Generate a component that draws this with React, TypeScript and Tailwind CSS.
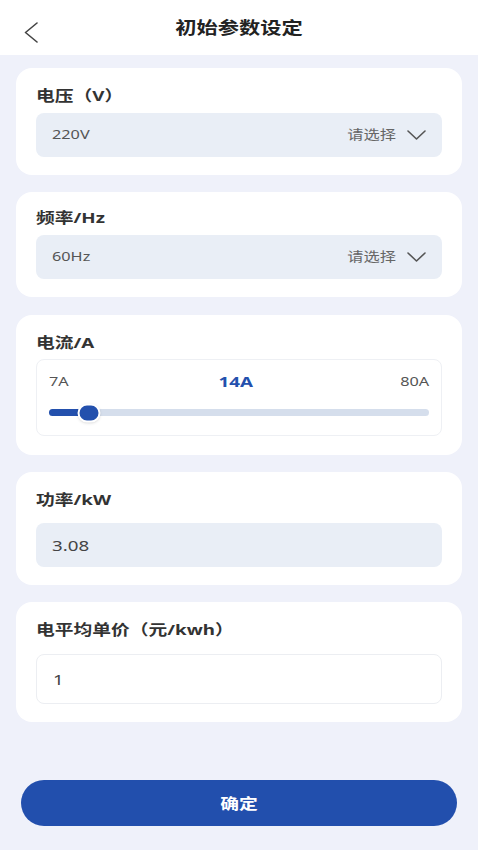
const font = { fontFamily: '"Noto Sans", "Noto Sans CJK SC", sans-serif' };

// the reference is drawn a little wide, so text gets a horizontal stretch
function Card({ className, children }: { className?: string; children: React.ReactNode }) {
  return <div className={`mx-4 rounded-2xl bg-white px-5 ${className ?? ''}`}>{children}</div>;
}

function Label({ text }: { text: string }) {
  return (
    <div className="h-[22px] text-[15px] font-bold leading-[22px] text-[#333]">
      <span className="inline-block origin-left scale-x-125">{text}</span>
    </div>
  );
}

function DownArrow() {
  return (
    <svg width="19" height="10" viewBox="0 0 19 10" fill="none">
      <polyline points="1,1 9.5,9 18,1" stroke="#555" strokeWidth="1.6" strokeLinecap="round" strokeLinejoin="round" />
    </svg>
  );
}

function SelectBox({ value }: { value: string }) {
  return (
    <div className="mt-[7px] flex h-[44px] items-center justify-between rounded-lg bg-[#e9eef6] pl-4 pr-4">
      <span className="inline-block origin-left scale-x-125 text-[13px] text-[#555]">{value}</span>
      <span className="flex items-center gap-[11px]">
        <span className="inline-block origin-right scale-x-125 text-[13px] text-[#666]">请选择</span>
        <DownArrow />
      </span>
    </div>
  );
}

export default function App() {
  const min = 7;
  const max = 80;
  const value = 14;
  const pct = ((value - min) / (max - min)) * 100 + 1;

  return (
    <div className="flex min-h-[850px] flex-col bg-[#eff1fa]" style={font}>
      {/* header */}
      <div className="relative flex h-[55px] items-center justify-center bg-white">
        <svg className="absolute left-[24px] top-[22px]" width="14" height="21" viewBox="0 0 14 21" fill="none">
          <polyline points="13,1 1.5,10.5 13,20" stroke="#444" strokeWidth="1.6" strokeLinecap="round" strokeLinejoin="round" />
        </svg>
        <span className="inline-block origin-center scale-x-125 text-[17px] font-bold text-[#222]">初始参数设定</span>
      </div>

      <Card className="mt-[13px] pt-4 pb-[18px]">
        <Label text="电压（V）" />
        <SelectBox value="220V" />
      </Card>

      <Card className="mt-[17px] pt-[14px] pb-[18px]">
        <Label text="频率/Hz" />
        <SelectBox value="60Hz" />
      </Card>

      <Card className="mt-[18px] pt-4 pb-[19px]">
        <Label text="电流/A" />
        <div className="mt-[6px] h-[77px] rounded-lg border border-[#eef0f4] px-3 pt-[10px]">
          <div className="flex items-center justify-between leading-[22px]">
            <span className="inline-block origin-left scale-x-125 text-[13px] text-[#555]">7A</span>
            <span className="inline-block origin-center scale-x-125 text-[15px] font-bold text-[#2350ad]">14A</span>
            <span className="inline-block origin-right scale-x-125 text-[13px] text-[#555]">80A</span>
          </div>
          <div className="relative mt-[17px] h-[7px] rounded-full bg-[#d5deec]">
            <div className="absolute left-0 top-0 h-full rounded-full bg-[#2350ad]" style={{ width: `${pct}%` }} />
            <div
              className="absolute top-1/2 h-[19px] w-[23px] -translate-x-1/2 -translate-y-1/2 rounded-full border-2 border-white bg-[#2350ad] shadow"
              style={{ left: `${pct}%` }}
            />
          </div>
        </div>
      </Card>

      <Card className="mt-[17px] pt-4 pb-[18px]">
        <Label text="功率/kW" />
        <div className="mt-[13px] flex h-[44px] items-center rounded-lg bg-[#e9eef6] px-4 text-[15px] text-[#444]">
          <span className="inline-block origin-left scale-x-125">3.08</span>
        </div>
      </Card>

      <Card className="mt-[17px] pt-4 pb-[18px]">
        <Label text="电平均单价（元/kwh）" />
        <div className="mt-[14px] flex h-[50px] items-center rounded-lg border border-[#eceef2] bg-white px-4 text-[15px] text-[#444]">
          <span className="inline-block origin-left scale-x-125">1</span>
        </div>
      </Card>

      <div className="mt-[58px] px-[21px]">
        <button className="flex h-[46px] w-full items-center justify-center rounded-full bg-[#224fad] text-[15px] font-bold text-white">
          <span className="inline-block origin-center scale-x-125">确定</span>
        </button>
      </div>
    </div>
  );
}
